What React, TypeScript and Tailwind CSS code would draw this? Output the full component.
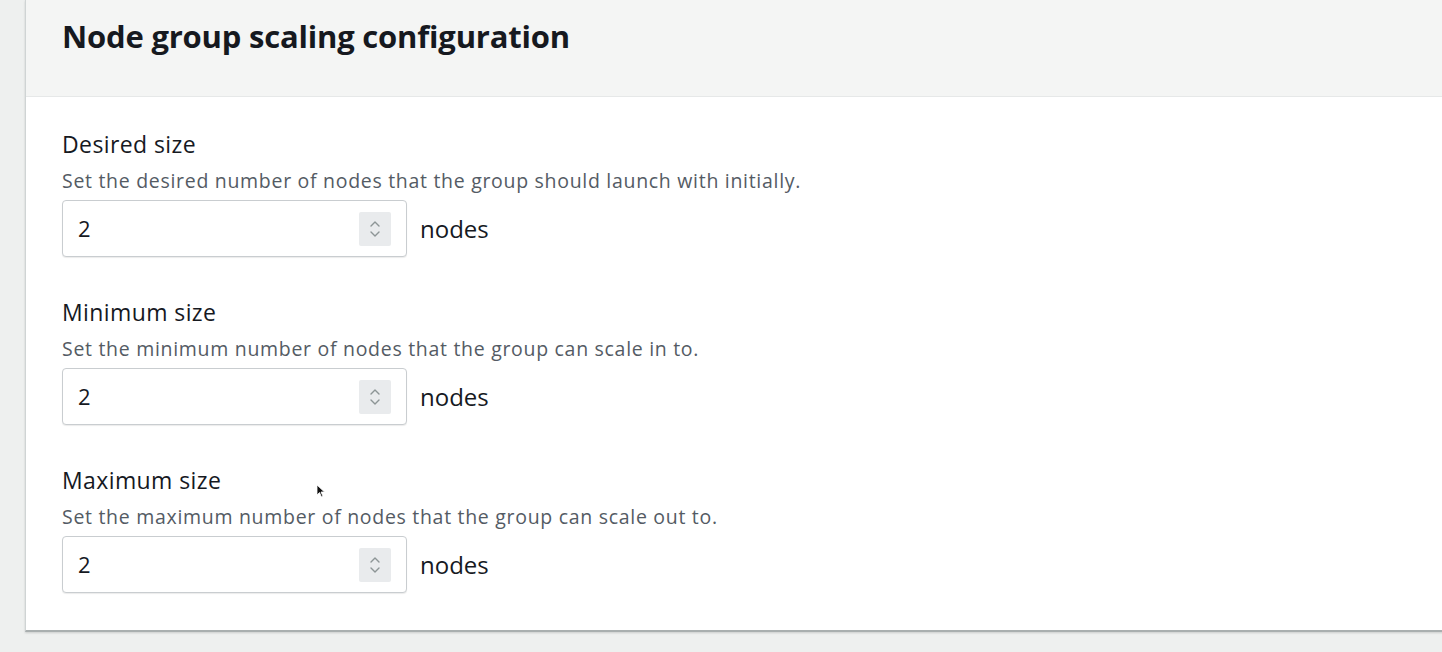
import React from "react";

function Spinner() {
  return (
    <div className="w-[32px] h-[34px] bg-[#e9ebed] rounded-[2px] flex items-center justify-center">
      <svg width="14" height="22" viewBox="0 0 14 22" fill="none" stroke="#8d9596" strokeWidth="1.4" strokeLinecap="round" strokeLinejoin="round">
        <path d="M3 8 L7 4 L11 8" />
        <path d="M3 14 L7 18 L11 14" />
      </svg>
    </div>
  );
}

function Field({ label, desc }: { label: string; desc: string }) {
  return (
    <div className="flex flex-col">
      <div className="text-[23px] leading-[28px] tracking-[0.4px] text-[#16191f] font-normal">{label}</div>
      <div className="text-[19.5px] leading-[24px] tracking-[0.7px] text-[#545b64] mt-[11px]">{desc}</div>
      <div className="flex items-center mt-[7px]">
        <div className="w-[345px] h-[57px] border border-[#c9cdd0] rounded-[4px] bg-white flex items-center pl-[15px] pr-[15px] shadow-[0_1px_1px_rgba(0,0,0,0.08)]">
          <span className="text-[22px] text-[#16191f] flex-1">2</span>
          <Spinner />
        </div>
        <span className="ml-[13px] text-[24px] text-[#16191f]">nodes</span>
      </div>
    </div>
  );
}

export default function App() {
  return (
    <div
      className="w-[1442px] h-[652px] bg-[#eef0ef] overflow-hidden pl-[25px] relative"
      style={{ fontFamily: '"Open Sans", "Noto Sans", sans-serif' }}
    >
      <div className="w-[1440px] h-[632px] bg-white border-l border-[#cfd4d4] border-b-2 border-b-[#a9afaf] shadow-[0_1px_2px_rgba(0,0,0,0.15)] flex flex-col">
        <div className="h-[97px] bg-[#f4f5f4] border-b border-[#e6e8e8] pl-[36px] pt-[16px]">
          <h2 className="text-[31px] leading-[40px] font-bold text-[#16191f] tracking-[-0.2px]">
            Node group scaling configuration
          </h2>
        </div>
        <div className="pl-[36px] pt-[33px] flex flex-col gap-[41px]">
          <Field label="Desired size" desc="Set the desired number of nodes that the group should launch with initially." />
          <Field label="Minimum size" desc="Set the minimum number of nodes that the group can scale in to." />
          <Field label="Maximum size" desc="Set the maximum number of nodes that the group can scale out to." />
        </div>
      </div>
      <svg className="absolute left-[316px] top-[484px]" width="10" height="14" viewBox="0 0 10 14">
        <path d="M1 1 L1 11 L3.5 8.5 L5.5 13 L7 12.3 L5 8 L8.5 8 Z" fill="#111" stroke="#fff" strokeWidth="0.8" />
      </svg>
    </div>
  );
}
